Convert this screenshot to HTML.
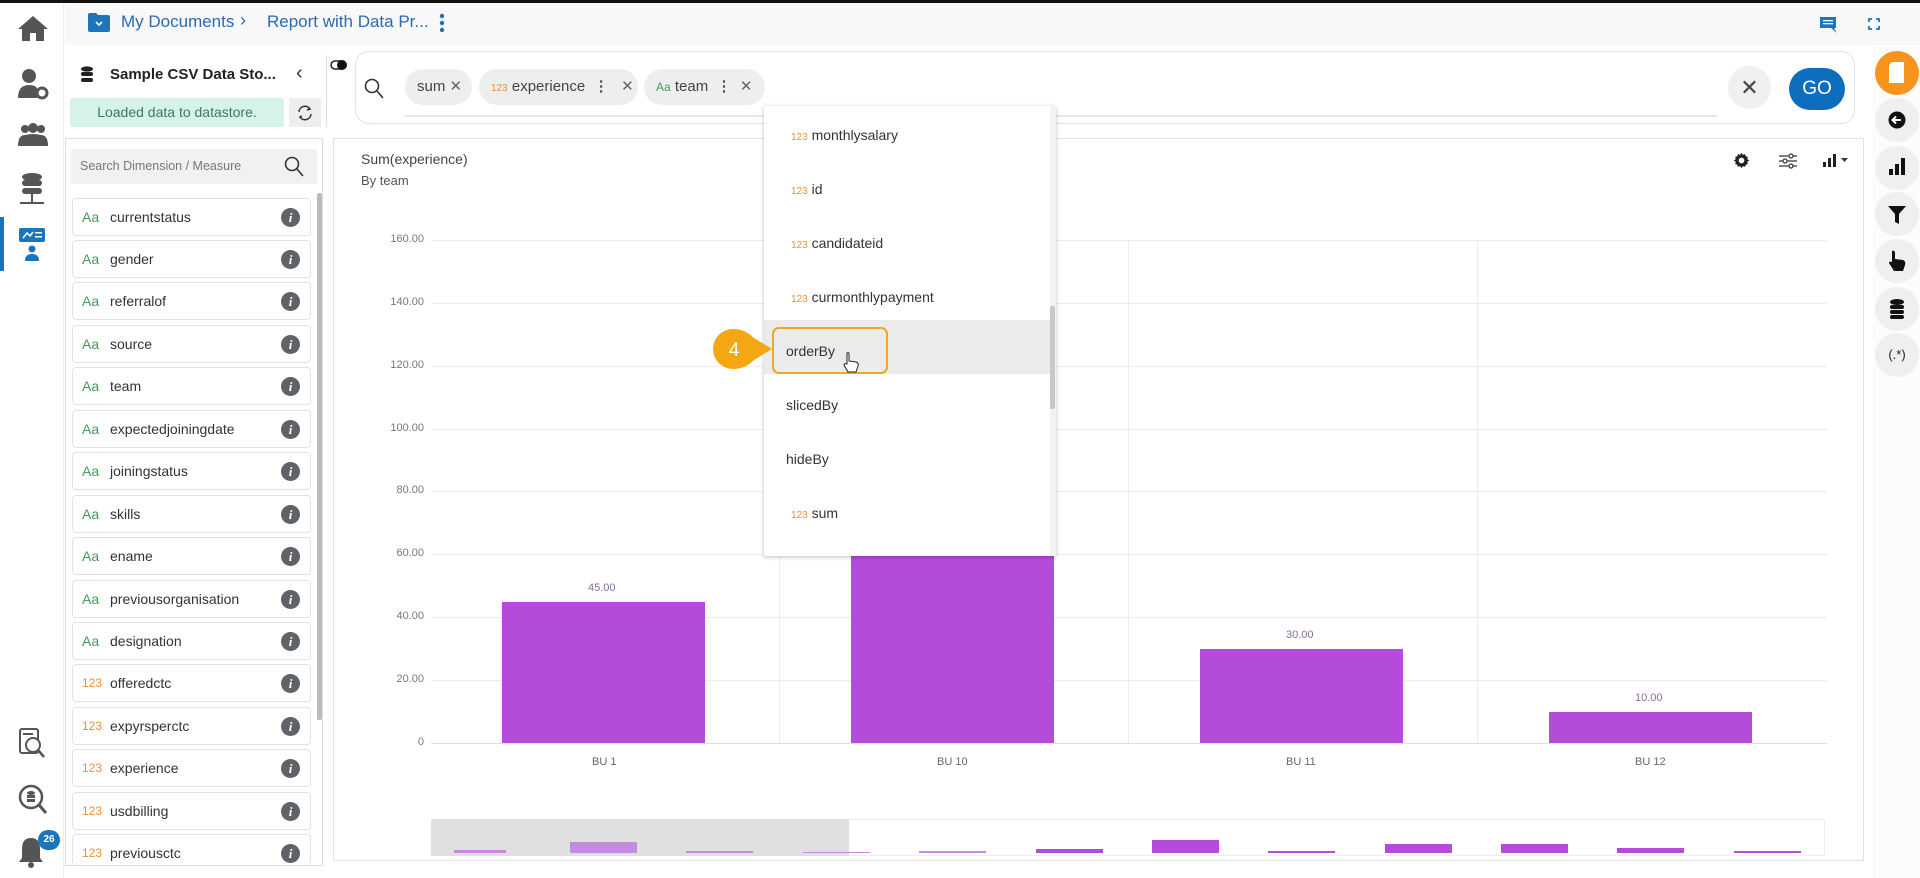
<!DOCTYPE html>
<html><head><meta charset="utf-8"><style>
*{box-sizing:border-box;margin:0;padding:0}
body{width:1920px;height:878px;overflow:hidden;background:#fff;font-family:"Liberation Sans",sans-serif;position:relative;color:#333}
.a{position:absolute}
.chip{position:absolute;top:69px;height:36px;border-radius:18px;background:#eeeeee;font-size:15px;color:#444;line-height:36px;padding-left:12px;white-space:nowrap}
.n{color:#e8923a;font-size:10px}
.g{color:#4a9a5a}
.item{position:absolute;left:72px;width:239px;height:38px;border:1px solid #e2e2e2;border-radius:4px;background:#fff;font-size:14px;color:#333;line-height:36px}
.item .t{position:absolute;left:9px;font-size:14px}
.item .l{position:absolute;left:37px}
.item .i{position:absolute;right:10px;top:9px;width:19px;height:19px;border-radius:50%;background:#5f6368;color:#fff;font-size:13px;font-weight:bold;font-style:italic;line-height:19px;text-align:center;font-family:"Liberation Serif",serif}
.rb{position:absolute;left:1875px;width:44px;height:44px;border-radius:50%;background:#efefef}
.dd{position:absolute;left:0;width:292px;height:54px;font-size:14px;color:#333;line-height:54px}
.yl{position:absolute;right:1496px;font-size:11px;color:#777;text-align:right}
.gl{position:absolute;left:431px;width:1396px;height:1px;background:#ececec}
</style></head><body>
<div class="a" style="left:0;top:0;width:1920px;height:3px;background:#111"></div>
<!-- left nav -->
<div class="a" style="left:0;top:3px;width:64px;height:875px;background:#fff;border-right:1px solid #eee"></div>
<svg class="a" style="left:17px;top:14px" width="32" height="28" viewBox="0 0 32 28"><path d="M16 2 L1 15 L5 15 L5 27 L13 27 L13 19 L19 19 L19 27 L27 27 L27 15 L31 15 Z" fill="#555"/></svg>
<svg class="a" style="left:17px;top:68px" width="32" height="32" viewBox="0 0 32 32"><circle cx="12" cy="8" r="7" fill="#555"/><path d="M1 30 Q1 17 12 17 Q18 17 20 20 L20 30Z" fill="#555"/><circle cx="25" cy="25" r="5" fill="none" stroke="#555" stroke-width="3"/></svg>
<svg class="a" style="left:17px;top:122px" width="32" height="26" viewBox="0 0 32 26"><circle cx="8" cy="7" r="4" fill="#555"/><circle cx="24" cy="7" r="4" fill="#555"/><circle cx="16" cy="6" r="5" fill="#555"/><path d="M1 24 Q1 13 8 13 Q16 11 24 13 Q31 13 31 24Z" fill="#555"/></svg>
<svg class="a" style="left:19px;top:172px" width="26" height="36" viewBox="0 0 26 36"><ellipse cx="13" cy="5" rx="10" ry="4" fill="#555"/><rect x="3" y="8" width="20" height="6" rx="3" fill="#555"/><rect x="3" y="16" width="20" height="6" rx="3" fill="#555"/><rect x="12" y="22" width="2" height="8" fill="#555"/><rect x="1" y="30" width="24" height="2" fill="#555"/></svg>
<div class="a" style="left:0;top:217px;width:4px;height:54px;background:#1b75bc"></div>
<svg class="a" style="left:19px;top:228px" width="26" height="34" viewBox="0 0 26 34"><rect x="0" y="0" width="26" height="14" rx="2" fill="#1b75bc"/><path d="M4 10 L8 5 L11 8 L14 4" stroke="#fff" stroke-width="1.5" fill="none"/><rect x="16" y="4" width="7" height="1.5" fill="#fff"/><rect x="16" y="8" width="7" height="1.5" fill="#fff"/><circle cx="13" cy="21" r="3.5" fill="#1b75bc"/><path d="M6 33 Q6 26 13 26 Q20 26 20 33Z" fill="#1b75bc"/></svg>
<svg class="a" style="left:18px;top:727px" width="28" height="32" viewBox="0 0 28 32"><rect x="2" y="2" width="18" height="24" rx="2" fill="none" stroke="#555" stroke-width="2"/><circle cx="15" cy="18" r="7" fill="#fff" stroke="#555" stroke-width="2"/><path d="M20 23 L26 30" stroke="#555" stroke-width="2.5"/><rect x="5" y="6" width="10" height="2" fill="#555"/></svg>
<svg class="a" style="left:18px;top:784px" width="30" height="32" viewBox="0 0 30 32"><circle cx="13" cy="13" r="11" fill="none" stroke="#555" stroke-width="2.5"/><ellipse cx="13" cy="9" rx="4" ry="2" fill="#555"/><rect x="9" y="11" width="8" height="3" fill="#555"/><rect x="9" y="15" width="8" height="3" fill="#555"/><path d="M21 21 L28 29" stroke="#555" stroke-width="3"/></svg>
<svg class="a" style="left:16px;top:834px" width="30" height="36" viewBox="0 0 30 36"><path d="M15 4 Q6 4 6 15 L6 24 L3 28 L27 28 L24 24 L24 15 Q24 4 15 4Z" fill="#555"/><circle cx="15" cy="31" r="3" fill="#555"/></svg>
<div class="a" style="left:38px;top:830px;width:22px;height:20px;border-radius:10px;background:#1b75bc;color:#fff;font-size:10px;font-weight:bold;text-align:center;line-height:20px">26</div>
<!-- header -->
<div class="a" style="left:65px;top:3px;width:1855px;height:42px;background:#f8f8f9"></div>
<svg class="a" style="left:88px;top:13px" width="22" height="19" viewBox="0 0 22 19"><path d="M0 2 Q0 0 2 0 L8 0 L10 2 L20 2 Q22 2 22 4 L22 17 Q22 19 20 19 L2 19 Q0 19 0 17Z" fill="#1b75bc"/><path d="M8 9 L11 12 L14 9" stroke="#fff" stroke-width="1.6" fill="none"/></svg>
<div class="a" style="left:121px;top:12px;font-size:17px;color:#2a6bb3">My Documents</div>
<div class="a" style="left:240px;top:10px;font-size:18px;color:#2a6bb3">›</div>
<div class="a" style="left:267px;top:12px;font-size:17px;color:#2a6bb3">Report with Data Pr...</div>
<svg class="a" style="left:439px;top:13px" width="6" height="20"><circle cx="3" cy="3" r="2.2" fill="#2a6bb3"/><circle cx="3" cy="10" r="2.2" fill="#2a6bb3"/><circle cx="3" cy="17" r="2.2" fill="#2a6bb3"/></svg>
<svg class="a" style="left:1820px;top:17px" width="17" height="16" viewBox="0 0 17 16"><path d="M0 0 L16 0 L16 11 L14 11 L17 16 L11 11 L0 11Z" fill="#1b75bc"/><rect x="3" y="3" width="10" height="1.3" fill="#fff"/><rect x="3" y="6" width="10" height="1.3" fill="#fff"/></svg>
<svg class="a" style="left:1868px;top:18px" width="12" height="12" viewBox="0 0 12 12" fill="none" stroke="#1b75bc" stroke-width="1.8"><path d="M1 4V1H4M8 1H11V4M11 8V11H8M4 11H1V8"/></svg>
<!-- left panel header -->
<svg class="a" style="left:80px;top:66px" width="14" height="18" viewBox="0 0 14 18"><ellipse cx="7" cy="3" rx="6" ry="2.6" fill="#222"/><rect x="1" y="6" width="12" height="4" rx="2" fill="#222"/><rect x="1" y="12" width="12" height="4" rx="2" fill="#222"/></svg>
<div class="a" style="left:110px;top:66px;font-size:15px;font-weight:bold;color:#222">Sample CSV Data Sto...</div>
<div class="a" style="left:296px;top:62px;font-size:20px;color:#333">‹</div>
<div class="a" style="left:70px;top:98px;width:214px;height:29px;background:#d5f3e8;border-radius:3px;font-size:14px;color:#3d7a5c;text-align:center;line-height:29px">Loaded data to datastore.</div>
<div class="a" style="left:289px;top:98px;width:32px;height:29px;background:#eeeeee"></div>
<svg class="a" style="left:296px;top:104px" width="18" height="18" viewBox="0 0 18 18" fill="none" stroke="#333" stroke-width="1.5"><path d="M3 8 A6 6 0 0 1 14 5 M15 10 A6 6 0 0 1 4 13"/><path d="M12 3 L14 5 L11 6 M6 12 L4 13 L6 15"/></svg>
<div class="a" style="left:326px;top:55px;width:1px;height:72px;background:#ddd"></div>
<svg class="a" style="left:330px;top:58px" width="18" height="14" viewBox="0 0 18 14"><rect x="1" y="3" width="14" height="8" rx="4" fill="none" stroke="#222" stroke-width="1.5"/><circle cx="12" cy="7" r="5" fill="#111"/></svg>
<!-- search bar -->
<div class="a" style="left:355px;top:51px;width:1500px;height:73px;border:1px solid #e3e3e3;border-radius:14px;background:#fff"></div>
<svg class="a" style="left:364px;top:78px" width="20" height="22" viewBox="0 0 20 22" fill="none" stroke="#333" stroke-width="1.6"><circle cx="8" cy="8" r="6.5"/><path d="M13 13 L19 20"/></svg>
<div class="chip" style="left:405px;width:67px">sum <span style="color:#666">✕</span></div>
<div class="chip" style="left:479px;width:159px"><span class="n">123</span> experience &nbsp;<b style="color:#555">⋮</b> &nbsp; <span style="color:#666">✕</span></div>
<div class="chip" style="left:644px;width:121px"><span class="g" style="font-size:12px">Aa</span> team &nbsp;<b style="color:#555">⋮</b> &nbsp;<span style="color:#666">✕</span></div>
<div class="a" style="left:404px;top:115px;width:1313px;height:2px;background:#e8e8e8"></div>
<div class="a" style="left:1728px;top:66px;width:43px;height:43px;border-radius:50%;background:#f0f0f0;text-align:center;line-height:43px;font-size:22px;color:#444">✕</div>
<div class="a" style="left:1789px;top:68px;width:56px;height:42px;border-radius:21px;background:#0d6ebd;color:#fff;text-align:center;line-height:42px;font-size:19px">GO</div>
<!-- right rail -->
<div class="a" style="left:1873px;top:45px;width:47px;height:833px;background:#fcfcfc"></div>
<div class="rb" style="top:51px;background:#f7941d"></div>
<svg class="a" style="left:1889px;top:62px" width="15" height="21" viewBox="0 0 15 21"><path d="M3 0 L15 0 L15 21 L0 21 L0 3Z" fill="#fff"/></svg>
<div class="rb" style="top:98px"></div><svg class="a" style="left:1888px;top:111px" width="18" height="18" viewBox="0 0 18 18"><circle cx="9" cy="9" r="8.5" fill="#111"/><path d="M13 9 H5 M8 5.5 L4.5 9 L8 12.5" stroke="#fff" stroke-width="2" fill="none"/></svg>
<div class="rb" style="top:146px"></div><svg class="a" style="left:1889px;top:157px" width="16" height="18"><rect x="0" y="12" width="4" height="6" fill="#111"/><rect x="6" y="7" width="4" height="11" fill="#111"/><rect x="12" y="1" width="4" height="17" fill="#111"/></svg>
<div class="rb" style="top:192px"></div><svg class="a" style="left:1888px;top:206px" width="18" height="18"><path d="M0 0 H18 L11 8 V18 L7 16 V8Z" fill="#111"/></svg>
<div class="rb" style="top:239px"></div><svg class="a" style="left:1888px;top:250px" width="18" height="22" viewBox="0 0 18 22"><path d="M4 1 Q6 0 7 2 L7 9 L15 10 Q18 11 17 15 L15 21 L6 21 L1 13 Q1 11 4 12 L4 2Z" fill="#111"/></svg>
<div class="rb" style="top:287px"></div><svg class="a" style="left:1889px;top:299px" width="16" height="20"><ellipse cx="8" cy="3" rx="7" ry="3" fill="#111"/><rect x="1" y="6" width="14" height="4" rx="2" fill="#111"/><rect x="1" y="11" width="14" height="4" rx="2" fill="#111"/><rect x="1" y="16" width="14" height="4" rx="2" fill="#111"/></svg>
<div class="rb" style="top:333px;text-align:center;line-height:44px;font-size:13px;color:#222">(.*)</div>
<!-- field list -->
<div class="a" style="left:65px;top:138px;width:258px;height:728px;border:1px solid #ddd;background:#fff"></div>
<div class="a" style="left:71px;top:149px;width:246px;height:35px;background:#f1f1f1;font-size:12.5px;color:#777;line-height:35px;padding-left:9px">Search Dimension / Measure</div>
<svg class="a" style="left:284px;top:156px" width="20" height="22" viewBox="0 0 20 22" fill="none" stroke="#333" stroke-width="1.6"><circle cx="8" cy="8" r="6.5"/><path d="M13 13 L19 20"/></svg>
<div class="a" style="left:317px;top:193px;width:5px;height:527px;background:#bbb;border-radius:2px"></div>
<div class="item" style="top:198px"><span class="t g">Aa</span><span class="l">currentstatus</span><span class="i">i</span></div>
<div class="item" style="top:240px"><span class="t g">Aa</span><span class="l">gender</span><span class="i">i</span></div>
<div class="item" style="top:282px"><span class="t g">Aa</span><span class="l">referralof</span><span class="i">i</span></div>
<div class="item" style="top:325px"><span class="t g">Aa</span><span class="l">source</span><span class="i">i</span></div>
<div class="item" style="top:367px"><span class="t g">Aa</span><span class="l">team</span><span class="i">i</span></div>
<div class="item" style="top:410px"><span class="t g">Aa</span><span class="l">expectedjoiningdate</span><span class="i">i</span></div>
<div class="item" style="top:452px"><span class="t g">Aa</span><span class="l">joiningstatus</span><span class="i">i</span></div>
<div class="item" style="top:495px"><span class="t g">Aa</span><span class="l">skills</span><span class="i">i</span></div>
<div class="item" style="top:537px"><span class="t g">Aa</span><span class="l">ename</span><span class="i">i</span></div>
<div class="item" style="top:580px"><span class="t g">Aa</span><span class="l">previousorganisation</span><span class="i">i</span></div>
<div class="item" style="top:622px"><span class="t g">Aa</span><span class="l">designation</span><span class="i">i</span></div>
<div class="item" style="top:664px"><span class="t n" style="font-size:12px">123</span><span class="l">offeredctc</span><span class="i">i</span></div>
<div class="item" style="top:707px"><span class="t n" style="font-size:12px">123</span><span class="l">expyrsperctc</span><span class="i">i</span></div>
<div class="item" style="top:749px"><span class="t n" style="font-size:12px">123</span><span class="l">experience</span><span class="i">i</span></div>
<div class="item" style="top:792px"><span class="t n" style="font-size:12px">123</span><span class="l">usdbilling</span><span class="i">i</span></div>
<div class="item" style="top:834px;height:31px;border-bottom:none"><span class="t n" style="font-size:12px">123</span><span class="l">previousctc</span><span class="i">i</span></div>
<!-- chart panel -->
<div class="a" style="left:333px;top:138px;width:1531px;height:723px;border:1px solid #e3e3e3;background:#fff"></div>
<div class="a" style="left:361px;top:151px;font-size:14px;color:#444">Sum(experience)</div>
<div class="a" style="left:361px;top:173px;font-size:13px;color:#555">By team</div>
<svg class="a" style="left:1733px;top:152px" width="17" height="17" viewBox="0 0 24 24"><path d="M12 1l2 3 3-1 1 3 3 1-1 3 3 2-3 2 1 3-3 1-1 3-3-1-2 3-2-3-3 1-1-3-3-1 1-3-3-2 3-2-1-3 3-1 1-3 3 1z" fill="#222"/><circle cx="12" cy="12" r="4" fill="#fff"/></svg>
<svg class="a" style="left:1779px;top:153px" width="18" height="16" fill="none" stroke="#333" stroke-width="1.2"><path d="M0 3H18M0 8H18M0 13H18"/><circle cx="12" cy="3" r="2" fill="#fff"/><circle cx="6" cy="8" r="2" fill="#fff"/><circle cx="12" cy="13" r="2" fill="#fff"/></svg>
<svg class="a" style="left:1823px;top:153px" width="28" height="15"><rect x="0" y="9" width="3" height="5" fill="#222"/><rect x="5" y="5" width="3" height="9" fill="#222"/><rect x="10" y="1" width="3" height="13" fill="#222"/><path d="M18 5H25L21.5 9Z" fill="#333"/></svg>
<!-- grid -->
<div class="gl" style="top:240px"></div><div class="gl" style="top:303px"></div><div class="gl" style="top:366px"></div><div class="gl" style="top:429px"></div><div class="gl" style="top:491px"></div><div class="gl" style="top:554px"></div><div class="gl" style="top:617px"></div><div class="gl" style="top:680px"></div><div class="gl" style="top:743px;background:#e0e0e0"></div>
<div class="a" style="left:779px;top:240px;width:1px;height:503px;background:#ececec"></div>
<div class="a" style="left:1128px;top:240px;width:1px;height:503px;background:#ececec"></div>
<div class="a" style="left:1477px;top:240px;width:1px;height:503px;background:#ececec"></div>
<div class="yl" style="top:233px">160.00</div><div class="yl" style="top:296px">140.00</div><div class="yl" style="top:359px">120.00</div><div class="yl" style="top:422px">100.00</div><div class="yl" style="top:484px">80.00</div><div class="yl" style="top:547px">60.00</div><div class="yl" style="top:610px">40.00</div><div class="yl" style="top:673px">20.00</div><div class="yl" style="top:736px">0</div>
<div class="a" style="left:502px;top:602px;width:203px;height:141px;background:#b44bdb"></div>
<div class="a" style="left:851px;top:430px;width:203px;height:313px;background:#b44bdb"></div>
<div class="a" style="left:1200px;top:649px;width:203px;height:94px;background:#b44bdb"></div>
<div class="a" style="left:1549px;top:712px;width:203px;height:31px;background:#b44bdb"></div>
<div class="a" style="left:588px;top:582px;font-size:11px;color:#8a6b97">45.00</div>
<div class="a" style="left:1286px;top:629px;font-size:11px;color:#8a6b97">30.00</div>
<div class="a" style="left:1635px;top:692px;font-size:11px;color:#8a6b97">10.00</div>
<div class="a" style="left:592px;top:756px;font-size:11px;color:#666">BU 1</div>
<div class="a" style="left:937px;top:756px;font-size:11px;color:#666">BU 10</div>
<div class="a" style="left:1286px;top:756px;font-size:11px;color:#666">BU 11</div>
<div class="a" style="left:1635px;top:756px;font-size:11px;color:#666">BU 12</div>
<!-- minimap -->
<div class="a" style="left:431px;top:819px;width:1394px;height:37px;border:1px solid #eee;background:#fff"></div>
<div class="a" style="left:431px;top:819px;width:418px;height:37px;background:#e0e0e0"></div>
<div class="a" style="left:454px;top:850px;width:52px;height:3px;background:#c58be0"></div>
<div class="a" style="left:570px;top:842px;width:67px;height:11px;background:#c58be0"></div>
<div class="a" style="left:686px;top:851px;width:67px;height:2px;background:#c58be0"></div>
<div class="a" style="left:803px;top:852px;width:67px;height:1px;background:#c58be0"></div>
<div class="a" style="left:919px;top:851px;width:67px;height:2px;background:#c58be0"></div>
<div class="a" style="left:1036px;top:849px;width:67px;height:4px;background:#b44bdb"></div>
<div class="a" style="left:1152px;top:840px;width:67px;height:13px;background:#b44bdb"></div>
<div class="a" style="left:1268px;top:851px;width:67px;height:2px;background:#b44bdb"></div>
<div class="a" style="left:1385px;top:844px;width:67px;height:9px;background:#b44bdb"></div>
<div class="a" style="left:1501px;top:844px;width:67px;height:9px;background:#b44bdb"></div>
<div class="a" style="left:1617px;top:848px;width:67px;height:5px;background:#b44bdb"></div>
<div class="a" style="left:1734px;top:851px;width:67px;height:2px;background:#b44bdb"></div>
<!-- dropdown -->
<div class="a" style="left:764px;top:106px;width:292px;height:450px;background:#fff;box-shadow:0 1px 4px rgba(0,0,0,.25);overflow:hidden">
 <div class="a" style="left:0;top:214px;width:286px;height:54px;background:#ebebeb"></div>
 <div class="dd" style="top:2px;padding-left:27px"><span class="n">123</span> monthlysalary</div>
 <div class="dd" style="top:56px;padding-left:27px"><span class="n">123</span> id</div>
 <div class="dd" style="top:110px;padding-left:27px"><span class="n">123</span> candidateid</div>
 <div class="dd" style="top:164px;padding-left:27px"><span class="n">123</span> curmonthlypayment</div>
 <div class="dd" style="top:218px;padding-left:22px">orderBy</div>
 <div class="dd" style="top:272px;padding-left:22px">slicedBy</div>
 <div class="dd" style="top:326px;padding-left:22px">hideBy</div>
 <div class="dd" style="top:380px;padding-left:27px"><span class="n">123</span> sum</div>
 <div class="a" style="left:286px;top:0;width:6px;height:450px;background:#f2f2f2"></div>
 <div class="a" style="left:286px;top:200px;width:5px;height:103px;background:#c8c8c8;border-radius:2px"></div>
</div>
<div class="a" style="left:772px;top:327px;width:116px;height:47px;border:2px solid #f0a81c;border-radius:7px"></div>
<svg class="a" style="left:710px;top:328px" width="64" height="42" viewBox="0 0 64 42"><path d="M23 1 Q35 1 44 10 L62 21 L44 32 Q35 41 23 41 A20 20 0 0 1 23 1Z" fill="#f4a712"/><text x="24" y="28" font-size="19" fill="#fff" text-anchor="middle" font-family="Liberation Sans">4</text></svg>
<svg class="a" style="left:842px;top:352px" width="18" height="22" viewBox="0 0 18 22"><path d="M5 1 Q7 0 7 2 L7 9 L14 10 Q17 11 16 14 L14 20 L6 20 L2 13 Q2 11 5 12Z" fill="#fff" stroke="#222" stroke-width="1"/></svg>
</body></html>
